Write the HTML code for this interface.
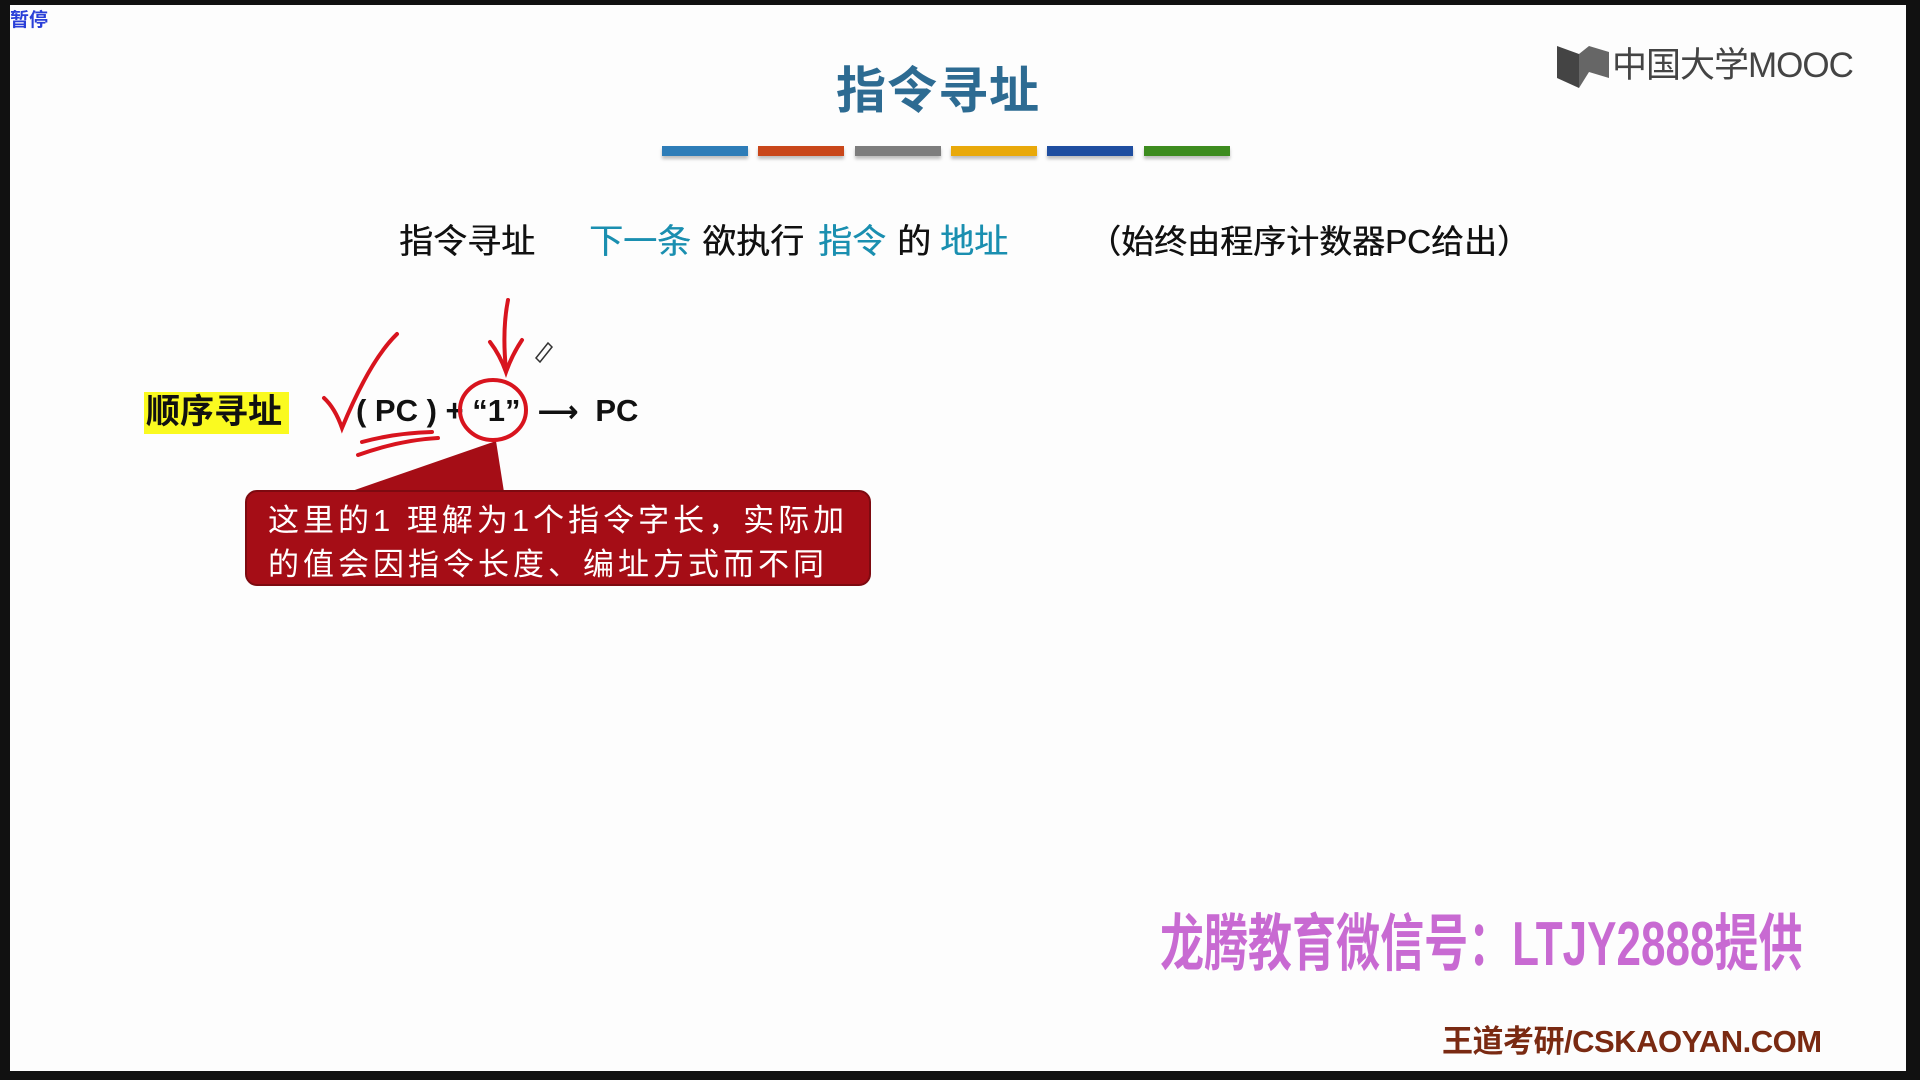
<!DOCTYPE html>
<html><head><meta charset="utf-8"><style>
html,body{margin:0;padding:0;}
body{width:1920px;height:1080px;background:#111;position:relative;overflow:hidden;font-family:"Liberation Sans","Noto Sans CJK SC",sans-serif;}
#s{position:absolute;left:10px;top:5px;width:1896px;height:1066px;background:#fdfdfd;}
.a{position:absolute;white-space:nowrap;line-height:1;}
.bar{position:absolute;top:146px;width:86px;height:10px;box-shadow:0 3px 3px rgba(0,0,0,.25);}
.l2{position:absolute;top:225px;font-size:34px;line-height:1;white-space:nowrap;color:#111;text-shadow:0.5px 0 0 currentColor;}
.c{color:#1a8fb0;}
</style></head><body>
<div id="s"></div>
<div class="a" style="left:10px;top:11px;font-size:19px;color:#2a3fd8;font-weight:bold;">暂停</div>
<div class="a" style="left:836px;top:66px;font-size:50px;color:#2d6b92;font-weight:bold;letter-spacing:1px;">指令寻址</div>
<div class="bar" style="left:662px;background:#2e7db8"></div>
<div class="bar" style="left:758px;background:#c9471a"></div>
<div class="bar" style="left:855px;background:#7d7d7d"></div>
<div class="bar" style="left:951px;background:#e9a90a"></div>
<div class="bar" style="left:1047px;background:#1f4ea0"></div>
<div class="bar" style="left:1144px;background:#3d8c1f"></div>
<svg class="a" style="left:1555px;top:42px" width="60" height="48" viewBox="0 0 60 48"><path d="M2 4 L24 12 L24 46 L2 36Z" fill="#444"/><path d="M24 12 L34 4 L54 10 L54 36 L34 30 L24 46Z" fill="#666"/></svg>
<div class="a" style="left:1612px;top:48px;font-size:35px;color:#444;letter-spacing:-1px;">中国大学MOOC</div>
<div class="l2" style="left:399px">指令寻址</div>
<div class="l2 c" style="left:589px">下一条</div>
<div class="l2" style="left:702px">欲执行</div>
<div class="l2 c" style="left:818px">指令</div>
<div class="l2" style="left:897px">的</div>
<div class="l2 c" style="left:940px">地址</div>
<div class="l2" style="left:1088px;font-size:33px">（始终由程序计数器PC给出）</div>
<div class="a" style="left:144px;top:392px;width:145px;height:42px;background:#fafa20;"></div>
<div class="a" style="left:146px;top:395px;font-size:34px;color:#111;font-weight:bold;">顺序寻址</div>
<div class="a" style="left:356px;top:395px;font-size:31px;color:#111;font-weight:bold;">( PC ) + “1”</div>
<div class="a" style="left:538px;top:395px;font-size:31px;color:#111;font-weight:bold;"><span style="font-size:28px">⟶</span>&nbsp;&nbsp;PC</div>
<svg class="a" style="left:0;top:0" width="1920" height="1080">
<path d="M349 492 L496 441 L504 492Z" fill="#a50d16"/>
<rect x="246" y="491" width="624" height="94" rx="11" fill="#a50d16" stroke="#7d0a10" stroke-width="2"/>
<g fill="none" stroke="#d8141e" stroke-width="4" stroke-linecap="round">
<path d="M324 398 Q335 408 342 428 Q370 360 397 334"/>
<path d="M358 455 Q400 440 438 438"/>
<path d="M362 442 Q395 433 432 432"/>
<path d="M508 300 Q502 330 506 370"/>
<path d="M490 342 Q500 355 506 372 Q512 355 522 340"/>
<ellipse cx="493" cy="410" rx="33" ry="30"/>
</g>
<path d="M536 358 L548 343 L552 347 L540 362Z" fill="none" stroke="#333" stroke-width="1.5"/>
</svg>
<div class="a" style="left:268px;top:499px;font-size:31px;color:#fff;line-height:44px;letter-spacing:4px;">这里的1 理解为1个指令字长，实际加<br>的值会因指令长度、编址方式而不同</div>
<div class="a" style="left:1160px;top:914px;font-size:62px;color:#c86ad2;font-weight:bold;transform:scaleX(0.71);transform-origin:0 0;">龙腾教育微信号：LTJY2888提供</div>
<div class="a" style="left:1442px;top:1026px;font-size:31px;color:#7a2a12;font-weight:bold;letter-spacing:-0.5px;">王道考研/CSKAOYAN.COM</div>
</body></html>
